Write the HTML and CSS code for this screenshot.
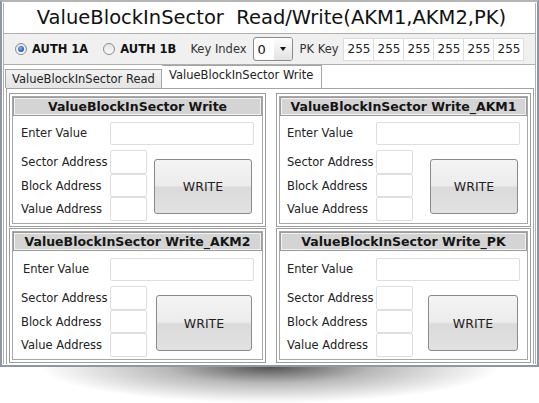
FILE: index.html
```html
<!DOCTYPE html>
<html>
<head>
<meta charset="utf-8">
<link rel="stylesheet" href="styles.css">
</head>
<body>
<div class="window">
  <div class="frame">
    <div class="title">ValueBlockInSector&nbsp; Read/Write(AKM1,AKM2,PK)</div>
    <div class="toolbar">
      <label class="radio"><span class="dot checked"></span>AUTH 1A</label>
      <label class="radio r2"><span class="dot"></span>AUTH 1B</label>
      <span class="lbl ki">Key Index</span>
      <div class="select"><span class="val">0</span><span class="drop"><span class="arrow"></span></span></div>
      <span class="lbl pk">PK Key</span>
      <div class="keys">
        <span class="key">255</span><span class="key">255</span><span class="key">255</span><span class="key">255</span><span class="key">255</span><span class="key">255</span>
      </div>
    </div>
    <div class="tabs">
      <div class="tab">ValueBlockInSector Read</div>
      <div class="tab active">ValueBlockInSector Write</div>
    </div>
    <div class="panel">
      <div class="grid">
        <section class="group g1">
          <div class="head">ValueBlockInSector Write</div>
          <div class="body">
            <span class="l l-enter">Enter Value</span>
            <span class="in wide"></span>
            <span class="l">Sector Address</span><span class="in sq"></span>
            <span class="l">Block Address</span><span class="in sq"></span>
            <span class="l">Value Address</span><span class="in sq"></span>
            <button class="btn">WRITE</button>
          </div>
        </section>
        <section class="group g2">
          <div class="head">ValueBlockInSector Write_AKM1</div>
          <div class="body">
            <span class="l l-enter">Enter Value</span>
            <span class="in wide"></span>
            <span class="l">Sector Address</span><span class="in sq"></span>
            <span class="l">Block Address</span><span class="in sq"></span>
            <span class="l">Value Address</span><span class="in sq"></span>
            <button class="btn">WRITE</button>
          </div>
        </section>
        <section class="group g3">
          <div class="head">ValueBlockInSector Write_AKM2</div>
          <div class="body">
            <span class="l l-enter">Enter Value</span>
            <span class="in wide"></span>
            <span class="l">Sector Address</span><span class="in sq"></span>
            <span class="l">Block Address</span><span class="in sq"></span>
            <span class="l">Value Address</span><span class="in sq"></span>
            <button class="btn">WRITE</button>
          </div>
        </section>
        <section class="group g4">
          <div class="head">ValueBlockInSector Write_PK</div>
          <div class="body">
            <span class="l l-enter">Enter Value</span>
            <span class="in wide"></span>
            <span class="l">Sector Address</span><span class="in sq"></span>
            <span class="l">Block Address</span><span class="in sq"></span>
            <span class="l">Value Address</span><span class="in sq"></span>
            <button class="btn">WRITE</button>
          </div>
        </section>
      </div>
    </div>
  </div>
</div>
<div class="shadow"></div>
</body>
</html>
```

FILE: styles.css
```css
* { box-sizing: border-box; }
html, body { margin: 0; padding: 0; background: #fff; }
body {
  width: 539px;
  height: 403px;
  overflow: hidden;
  font-family: "DejaVu Sans", Verdana, sans-serif;
  color: #222;
}
.window {
  width: 539px;
  height: 367px;
  border: 2px solid #8e97a3;
  border-top-color: #b4b4b4;
  padding: 1px;
  background: #fff;
}
.frame {
  height: 100%;
  border-left: 1px solid #b0b0b0;
  border-right: 1px solid #b0b0b0;
  display: flex;
  flex-direction: column;
}
.title {
  height: 30px;
  font-size: 19.5px;
  line-height: 30px;
  text-align: center;
  color: #111;
  white-space: nowrap;
  padding-left: 4px;
}
.toolbar {
  height: 32px;
  border-top: 1px solid #aeaeae;
  border-bottom: 1px solid #aeaeae;
  background: #f0f0f0;
  display: flex;
  align-items: center;
  padding-left: 11px;
  font-size: 11.5px;
}
.radio {
  display: flex;
  align-items: center;
  font-weight: bold;
  color: #111;
  gap: 5px;
}
.r2 { margin-left: 15px; }
.dot {
  width: 12px;
  height: 12px;
  border-radius: 50%;
  border: 1px solid #8c8c8c;
  background: linear-gradient(#e4e4e4, #fafafa);
  display: inline-flex;
  align-items: center;
  justify-content: center;
}
.dot.checked::after {
  content: "";
  width: 6px;
  height: 6px;
  border-radius: 50%;
  background: radial-gradient(circle at 40% 35%, #7fb2f0, #1d5bb8 70%);
}
.lbl { color: #333; }
.ki { margin-left: 14px; }
.select {
  margin-left: 6px;
  width: 40px;
  height: 24px;
  border: 1px solid #8a8a8a;
  border-radius: 3px;
  background: #fff;
  display: flex;
  align-items: center;
  justify-content: space-between;
}
.val { font-size: 13px; padding-left: 4px; color: #111; }
.drop {
  width: 18px;
  height: 100%;
  display: flex;
  align-items: center;
  justify-content: center;
  background: linear-gradient(#fdfdfd, #e2e2e2);
  border-radius: 0 2px 2px 0;
}
.arrow {
  width: 0; height: 0;
  border-left: 3.5px solid transparent;
  border-right: 3.5px solid transparent;
  border-top: 4px solid #111;
}
.pk { margin-left: 7px; }
.keys { display: flex; margin-left: 4px; }
.key {
  width: 31px;
  height: 23px;
  border: 1px solid #dcdcdc;
  margin-right: -1px;
  background: #fff;
  font-size: 12px;
  line-height: 20px;
  padding-left: 4px;
  color: #222;
}
.tabs {
  height: 23px;
  display: flex;
  align-items: flex-end;
  padding-left: 1px;
  font-size: 11.5px;
}
.tab {
  height: 19px;
  border: 1px solid #a4a4a4;
  border-bottom: none;
  background: linear-gradient(#f2f2f2, #e4e4e4);
  padding: 0 5px 0 6px;
  line-height: 19px;
  width: 157px;
  color: #222;
  white-space: nowrap;
}
.tab.active {
  height: 23px;
  width: 160px;
  background: #fff;
  border-left: none;
  line-height: 19px;
  padding-left: 7px;
}
.panel {
  flex: 1;
  margin: 0 1px 0 2px;
  border: 1px solid #a4a4a4;
  border-bottom: none;
  padding: 4px 1px 0 2px;
}
.grid {
  display: grid;
  grid-template-columns: 257px 255px;
  grid-template-rows: 134px 135px;
  column-gap: 10px;
  row-gap: 1px;
}
.group {
  border: 1px solid #9c9c9c;
  box-shadow: inset 0 0 0 2px #fff, inset 0 0 0 3px #a8a8a8;
  padding: 3px;
}
.head {
  height: 19px;
  border: 1px solid #9c9c9c;
  box-shadow: inset 0 0 0 1px #f2f2f2;
  background: #d4d4d4;
  font-weight: bold;
  font-size: 12.5px;
  line-height: 17px;
  text-align: center;
  color: #151515;
  white-space: nowrap;
}
.body {
  display: grid;
  grid-template-columns: 89px 37px auto;
  grid-template-rows: 28px 24px 23px 24px;
  padding-left: 8px;
  margin-top: 6px;
  font-size: 11.5px;
}
.l {
  align-self: center;
  color: #222;
  white-space: nowrap;
}
.l-enter { align-self: start; line-height: 23px; }
.in {
  background: #fff;
  border: 1px solid #dedede;
  border-radius: 2px;
}
.wide { grid-column: 2 / 4; width: 144px; height: 23px; }
.sq { width: 37px; }
.btn {
  grid-column: 3;
  grid-row: 2 / span 3;
  align-self: start;
  margin-top: 9px;
  margin-left: 7px;
  width: 98px;
  height: 55px;
  border: 1px solid #8a8a8a;
  border-radius: 3px;
  background: linear-gradient(#f4f4f4 0%, #ececec 48%, #dadada 52%, #e2e2e2 100%);
  font-family: "DejaVu Sans", Verdana, sans-serif;
  font-size: 12.5px;
  color: #222;
  padding: 0;
}
.g2 .body, .g4 .body { padding-left: 7px; }
.g2 .btn { margin-left: 17px; width: 88px; }
.g3 .btn { margin-left: 9px; width: 96px; height: 56px; }
.g3 .l-enter { padding-left: 2px; }
.g4 .btn { margin-left: 15px; width: 90px; height: 56px; }
.g3 .body, .g4 .body { margin-top: 7px; }
.shadow {
  height: 36px;
  margin: 0 40px;
  background: radial-gradient(ellipse 50% 100% at 50% 0%, rgba(40,40,40,0.8) 0%, rgba(100,100,100,0.45) 45%, rgba(255,255,255,0) 100%);
}
```
